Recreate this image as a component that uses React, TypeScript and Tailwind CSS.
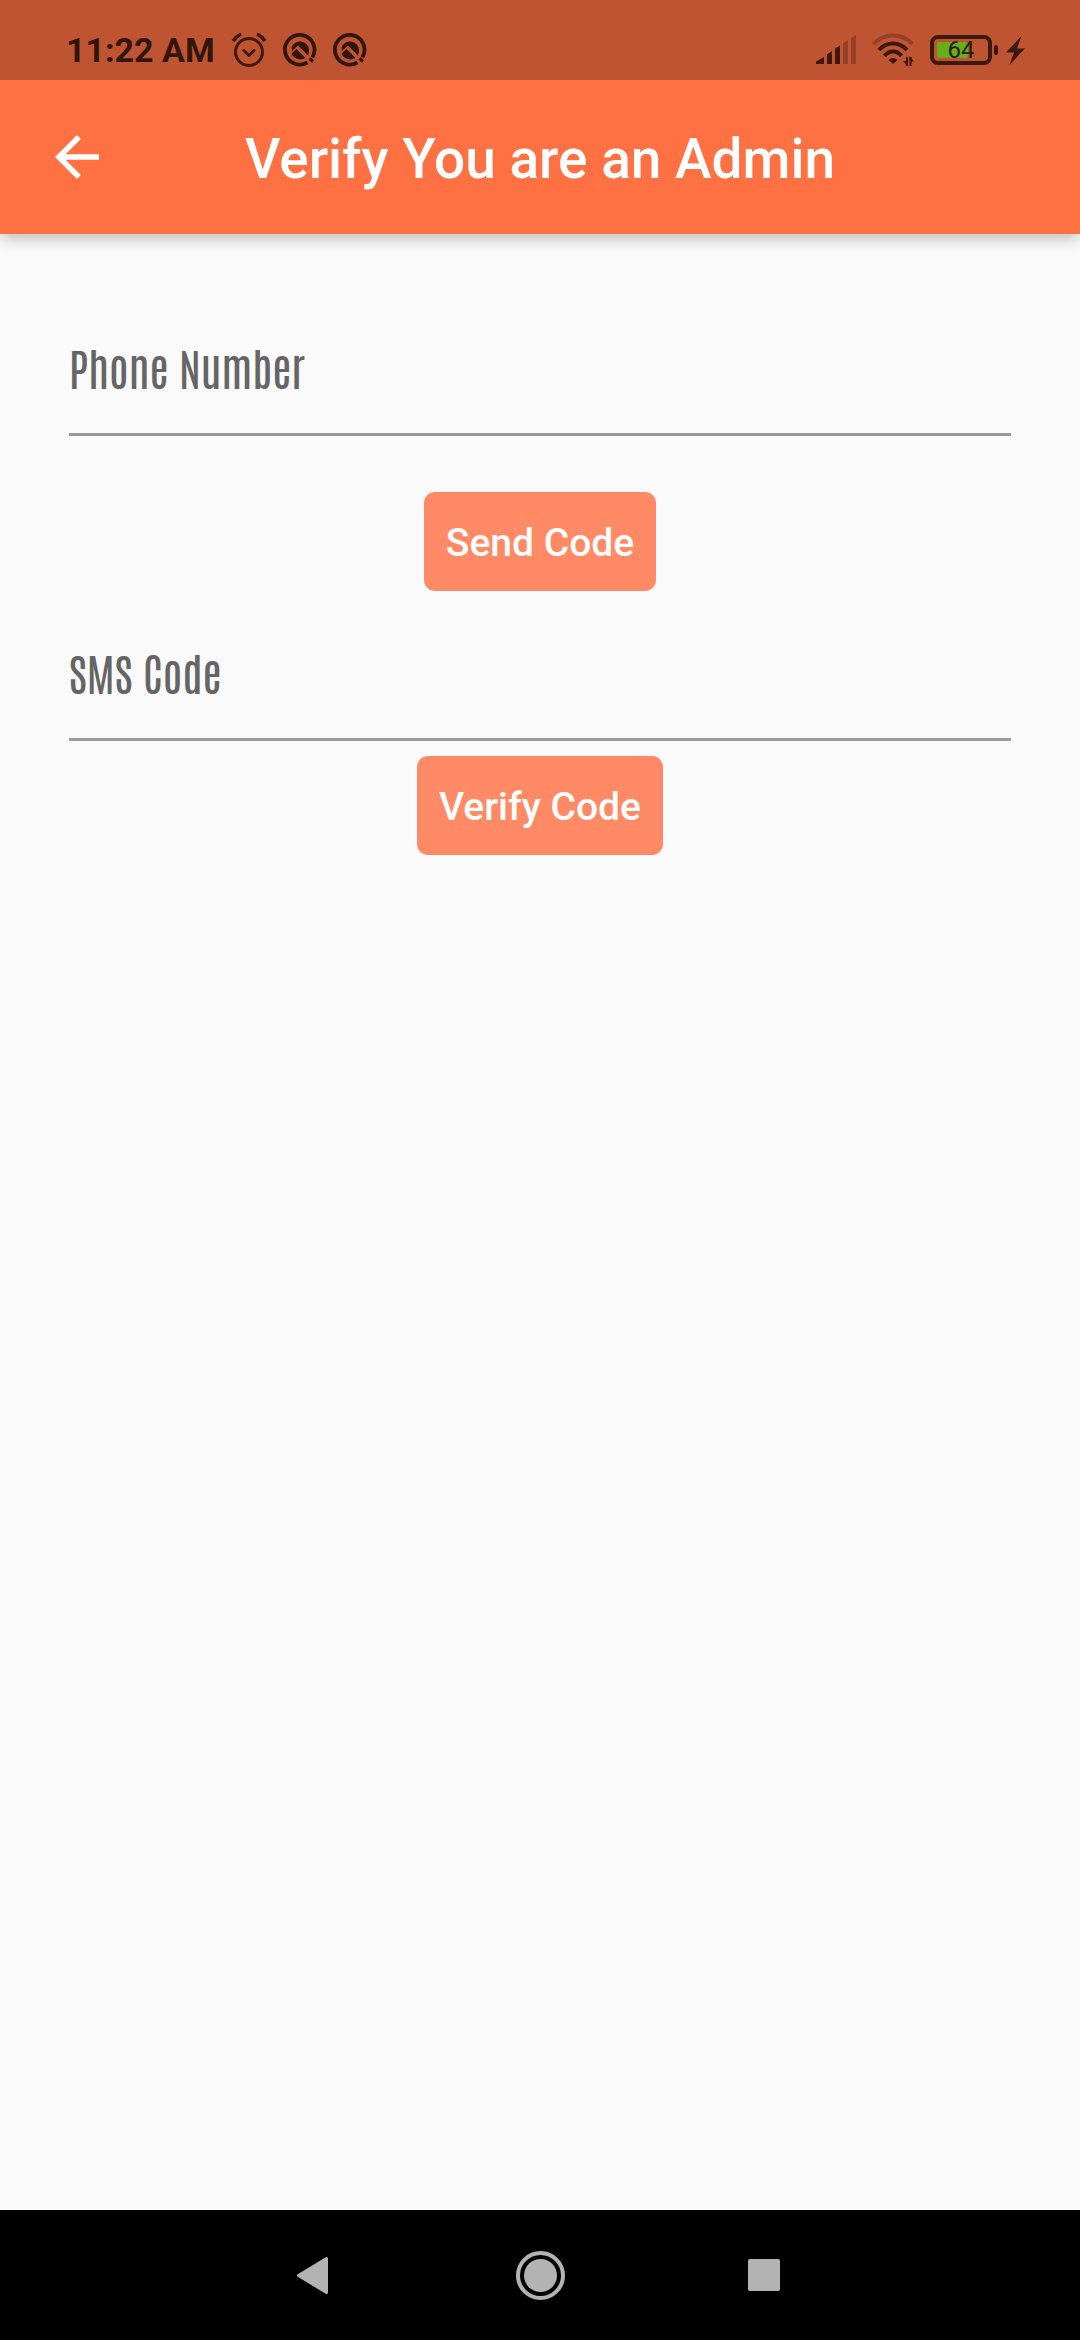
import React from "react";

function AlarmIcon() {
  return (
    <svg className="h-[36px] w-[36px]" viewBox="0 0 36 36" fill="none" stroke="#44190c" strokeWidth="3" strokeLinecap="round" strokeLinejoin="round" aria-hidden="true">
      <circle cx="18" cy="20" r="13.5" />
      <path d="M13 18.5l5 5 5-5" />
      <path d="M2 9Q5 4.500 10 2M34 9Q31 4.500 26 2" strokeLinecap="butt" strokeWidth="3.600" />
    </svg>
  );
}

function SearchAppIcon() {
  return (
    <svg className="h-[34px] w-[34px]" viewBox="0 0 34 34" fill="none" aria-hidden="true">
      <path d="M24.500 29.300A14.800 14.800 0 1 1 29.300 24.500" stroke="#33150b" strokeWidth="3.800" />
      <path d="M8.500 14.500A9 9 0 0 1 26 17Q26 20 25 22.500L15 12.500L9 18Z" fill="#33150b" />
      <path d="M8.500 20.500L13.500 16L22.500 25Q17 28 11.500 24.500Q9.500 23 8.500 20.500Z" fill="#33150b" />
      <path d="M14 14L30 30" stroke="#bf5432" strokeWidth="2" />
      <path d="M26.500 25.500L30 28.500" stroke="#33150b" strokeWidth="3" />
    </svg>
  );
}

function SignalIcon() {
  return (
    <svg className="h-[30px] w-[40px]" viewBox="0 0 40 30" fill="#3d190d" aria-hidden="true">
      <path d="M0 29V26.500L8 22V29ZM11 29V19.500L16 16V29ZM19 29V13.500L24 10.500V29Z" />
      <path d="M27 29V8.500L32 5V29ZM35 29V3L40 0V29Z" fill="#964026" />
    </svg>
  );
}

function WifiIcon() {
  return (
    <svg className="h-[34px] w-[42px]" viewBox="0 0 42 34" fill="none" stroke="#3d190d" strokeWidth="4" aria-hidden="true">
      <path d="M1.500 11Q9.500 2.500 21 2.500T40.500 11" stroke="#964026" />
      <path d="M7 17Q13 10.500 21 10.500T35 17" />
      <path d="M12.500 23Q16 18.500 21 18.500T29.500 23" />
      <path d="M16.500 27Q21 23 25.500 27L21 31Z" fill="#3d190d" stroke="none" />
      <path d="M35 24V33M38.500 33V24" strokeWidth="2" />
      <path d="M36 33.500L31 28H36ZM37.500 23L42 28.500H37.500Z" fill="#3d190d" stroke="none" />
    </svg>
  );
}

function Battery() {
  return (
    <div className="flex items-center gap-[2px]">
      <div className="grid h-[30px] w-[62px] items-center rounded-[8px] border-4 border-[#3d190d] px-[3px]">
        <span className="col-start-1 row-start-1 h-[16px] w-[31px] rounded-[2px] bg-[#67ae1b]" />
        <span className="col-start-1 row-start-1 text-center text-[24px] leading-[22px] text-[#24200b]">64</span>
      </div>
      <span className="h-[10px] w-[4px] rounded-[2px] bg-[#3d190d]" />
    </div>
  );
}

function BoltIcon() {
  return (
    <svg className="h-[29px] w-[19px]" viewBox="0 0 19 29" fill="#3d190d" aria-hidden="true">
      <path d="M15.500 0L0 16.500H8L3.500 29L19 12.500H11Z" />
    </svg>
  );
}

function StatusBar() {
  return (
    <div className="relative z-20 flex h-[80px] items-center justify-between bg-[#bf5432] pt-5 pr-[55px] pl-[66px]">
      <div className="flex items-center gap-4">
        <span className="text-[34px] leading-[36px] font-bold text-[#33150b]">11:22 AM</span>
        <AlarmIcon />
        <SearchAppIcon />
        <SearchAppIcon />
      </div>
      <div className="flex items-center">
        <SignalIcon />
        <span className="ml-4"><WifiIcon /></span>
        <span className="ml-4"><Battery /></span>
        <span className="ml-2"><BoltIcon /></span>
      </div>
    </div>
  );
}

function AppBar() {
  return (
    <header className="relative z-10 grid h-[154px] grid-cols-[154px_1fr_154px] items-center bg-[#ff7043] shadow-[0_7px_14px_-2px_rgba(0,0,0,0.24)]">
      <button type="button" aria-label="Back" className="flex h-full items-center justify-center text-white">
        <svg className="h-[66px] w-[66px]" viewBox="0 0 24 24" fill="currentColor" aria-hidden="true">
          <path d="M20 11H7.830l5.590-5.590L12 4l-8 8 8 8 1.410-1.410L7.830 13H20v-2z" />
        </svg>
      </button>
      <h1 className="pt-1 text-center text-[55px] leading-[64px] font-medium whitespace-nowrap text-white">
        Verify You are an Admin
      </h1>
    </header>
  );
}

function Field({ id, label, type }: { id: string; label: string; type: string }) {
  return (
    <div className="grid h-[132px] w-full border-b-[3px] border-[#9a9a9a]">
      <input
        id={id}
        type={type}
        placeholder=" "
        className="peer col-start-1 row-start-1 w-full bg-transparent font-['Antonio',sans-serif] text-[44px] text-[#333333] outline-none"
      />
      <label
        htmlFor={id}
        className="invisible col-start-1 row-start-1 self-center pb-1 font-['Antonio',sans-serif] text-[44px] leading-[52px] text-[#656565] peer-placeholder-shown:visible"
      >
        {label}
      </label>
    </div>
  );
}

function ActionButton({ children }: { children: React.ReactNode }) {
  return (
    <button type="submit" className="h-[99px] rounded-[11px] bg-[#ff8a65] px-[22px] pt-[2px] text-[39px] leading-[46px] font-medium text-white">
      {children}
    </button>
  );
}

function NavBar() {
  return (
    <nav className="flex h-[130px] items-center justify-center gap-[170px] bg-black text-[#b3b3b3]">
      <button type="button" aria-label="Back">
        <svg className="h-[56px] w-[56px]" viewBox="0 0 56 56" fill="currentColor" stroke="currentColor" strokeWidth="3" strokeLinejoin="round" aria-hidden="true">
          <path d="M12.500 28.500L40.500 11.500V45.500Z" />
        </svg>
      </button>
      <button type="button" aria-label="Home">
        <svg className="h-[56px] w-[56px]" viewBox="0 0 56 56" fill="none" aria-hidden="true">
          <circle cx="28.500" cy="28.500" r="22.500" stroke="currentColor" strokeWidth="4" />
          <circle cx="28.500" cy="28.500" r="16.500" fill="currentColor" />
        </svg>
      </button>
      <button type="button" aria-label="Recent apps">
        <svg className="h-[56px] w-[56px]" viewBox="0 0 56 56" fill="currentColor" aria-hidden="true">
          <rect x="10" y="12" width="32" height="32" rx="2" />
        </svg>
      </button>
    </nav>
  );
}

export default function App() {
  return (
    <div className="flex min-h-screen flex-col bg-[#fafafa] font-['Roboto',sans-serif]">
      <StatusBar />
      <AppBar />
      <main className="flex flex-1 flex-col px-[69px] pt-[70px]">
        <form className="flex flex-col items-center" onSubmit={(e) => e.preventDefault()}>
          <Field id="phone" label="Phone Number" type="tel" />
          <div className="pt-14 pb-[18px]">
            <ActionButton>Send Code</ActionButton>
          </div>
          <Field id="sms" label="SMS Code" type="text" />
          <div className="pt-[15px]">
            <ActionButton>Verify Code</ActionButton>
          </div>
        </form>
      </main>
      <NavBar />
    </div>
  );
}
